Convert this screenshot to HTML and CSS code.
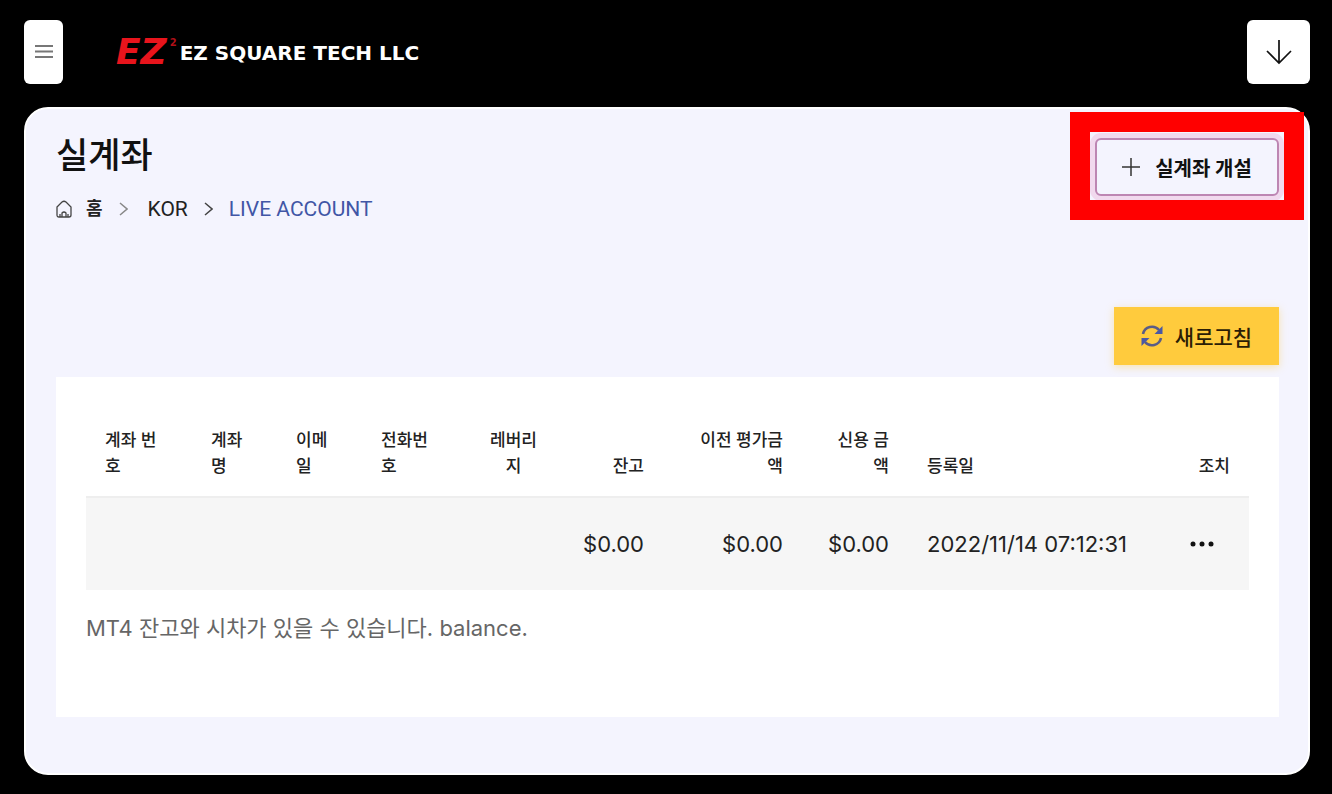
FILE: index.html
```html
<!DOCTYPE html>
<html lang="ko">
<head>
    <meta charset="UTF-8">
    <meta name="viewport" content="width=device-width, initial-scale=1.0">
    <title>실계좌 - EZ SQUARE TECH LLC</title>
    <link rel="stylesheet" href="styles.css">
</head>
<body>

    <header class="topbar">
        <button class="menu-btn" type="button" aria-label="Menu">
            <svg width="20" height="20" viewBox="0 0 20 20" fill="none" stroke="#777" stroke-width="2">
                <path d="M1 4h18M1 9.500h18M1 15h18"/>
            </svg>
        </button>
        <a class="logo" href="#">
            <span class="logo-mark">EZ</span><sup class="logo-sup">2</sup>
            <span class="logo-name">EZ SQUARE TECH LLC</span>
        </a>
        <button class="down-btn" type="button" aria-label="Open">
            <svg width="28" height="28" viewBox="0 0 28 28" fill="none" stroke="#111" stroke-width="1.700">
                <path d="M14 2v23M2 13l12 12 12-12"/>
            </svg>
        </button>
    </header>

    <main class="panel">
        <div class="page-head">
            <div>
                <h1>실계좌</h1>
                <nav class="breadcrumb">
                    <svg class="home-icon" width="16" height="18" viewBox="0 0 16 18" fill="none" stroke="#444" stroke-width="1.300">
                        <path d="M1 7l5-5q2-1.500 4 0l5 5v8q0 2-2 2H3q-2 0-2-2zM4 17v-3M6 17v-4q2-2 4 0v4M12 17v-3"/>
                    </svg>
                    <a class="home" href="#">홈</a>
                    <svg class="sep light" width="9" height="14" viewBox="0 0 9 14"><path d="M1 1l7 6-7 6"/></svg>
                    <a href="#">KOR</a>
                    <svg class="sep" width="9" height="14" viewBox="0 0 9 14"><path d="M1 1l7 6-7 6"/></svg>
                    <a class="current" href="#">LIVE ACCOUNT</a>
                </nav>
            </div>
            <button class="open-btn" type="button">
                <svg width="18" height="18" viewBox="0 0 18 18" stroke="#333" stroke-width="1.500">
                    <path d="M9 0v18M0 9h18"/>
                </svg>
                실계좌 개설
            </button>
        </div>

        <div class="toolbar">
            <button class="refresh-btn" type="button">
                <svg width="22" height="22" viewBox="0 0 22 22">
                    <path d="M2 9a9.200 9.200 0 0 1 16-4M20 13a9.200 9.200 0 0 1-16 4" fill="none" stroke="#5a5c86" stroke-width="2.600"/>
                    <path d="M21.500 1v8h-8zM.5 21v-8h8z" fill="#4a58a5"/>
                </svg>
                새로고침
            </button>
        </div>

        <section class="card">
            <table class="accounts">
                <colgroup>
                    <col class="col-no">
                    <col class="col-name">
                    <col class="col-mail">
                    <col class="col-phone">
                    <col class="col-lev">
                    <col class="col-balance">
                    <col class="col-equity">
                    <col class="col-credit">
                    <col class="col-date">
                    <col>
                </colgroup>
                <thead>
                    <tr>
                        <th>계좌 번<br>호</th>
                        <th>계좌<br>명</th>
                        <th>이메<br>일</th>
                        <th>전화번<br>호</th>
                        <th class="center">레버리<br>지</th>
                        <th class="num">잔고</th>
                        <th class="num">이전 평가금<br>액</th>
                        <th class="num">신용 금<br>액</th>
                        <th>등록일</th>
                        <th class="num">조치</th>
                    </tr>
                </thead>
                <tbody>
                    <tr>
                        <td></td>
                        <td></td>
                        <td></td>
                        <td></td>
                        <td></td>
                        <td class="num">$0.00</td>
                        <td class="num">$0.00</td>
                        <td class="num">$0.00</td>
                        <td>2022/11/14 07:12:31</td>
                        <td>
                            <button class="more-btn" type="button" aria-label="More">
                                <svg width="24" height="6" viewBox="0 0 24 6" fill="#111">
                                    <circle cx="3" cy="3" r="2.500"/>
                                    <circle cx="12" cy="3" r="2.500"/>
                                    <circle cx="21" cy="3" r="2.500"/>
                                </svg>
                            </button>
                        </td>
                    </tr>
                </tbody>
            </table>
            <p class="note">MT4 잔고와 시차가 있을 수 있습니다. balance.</p>
        </section>
    </main>

</body>
</html>
```
FILE: styles.css
```css
* {
    box-sizing: border-box;
}

body {
    margin: 0;
    padding: 20px 22px 19px 24px;
    background-color: #000;
    color: #222;
    font-family: Inter, "Noto Sans CJK KR", sans-serif;
}

button {
    font-family: inherit;
    border: none;
    padding: 0;
    cursor: pointer;
}

a {
    color: inherit;
    text-decoration: none;
}

.topbar {
    display: flex;
    align-items: center;
    height: 64px;
    margin-bottom: 23px;
}

.menu-btn,
.down-btn {
    display: flex;
    align-items: center;
    justify-content: center;
    height: 64px;
    background-color: #fff;
    border-radius: 6px;
}

.menu-btn {
    width: 39px;
}

.down-btn {
    width: 63px;
    margin-left: auto;
}

.logo {
    display: flex;
    align-items: center;
    margin-left: 53px;
    font-family: "DejaVu Sans", sans-serif;
    font-weight: bold;
    line-height: 32px;
}

.logo-mark {
    color: #e8141c;
    font-size: 36px;
    font-style: italic;
}

.logo-sup {
    align-self: flex-start;
    margin-left: 3px;
    color: #b01018;
    font-size: 10px;
    line-height: 16px;
}

.logo-name {
    margin-left: 3px;
    padding-top: 2px;
    color: #fff;
    font-size: 20px;
}

.panel {
    padding: 29px 29px 56px 30px;
    background-color: #f4f4fe;
    border: 2px solid #fff;
    border-radius: 24px;
}

.page-head {
    display: flex;
    justify-content: space-between;
    align-items: flex-start;
}

h1 {
    margin: 0 0 23px;
    color: #111;
    font-size: 35px;
    font-weight: 500;
    line-height: 34px;
}

.breadcrumb {
    display: flex;
    align-items: center;
    font-family: Roboto, "Noto Sans CJK KR", sans-serif;
    font-size: 21px;
    line-height: 28px;
}

.home {
    margin-left: 14px;
    font-size: 18px;
    font-weight: bold;
}

.sep {
    margin: 0 16px;
    fill: none;
    stroke: #444;
    stroke-width: 1.5;
}

.sep.light {
    margin-right: 20px;
    stroke: #888;
}

.current {
    color: #4156a6;
}

.open-btn {
    position: relative;
    display: flex;
    align-items: center;
    justify-content: center;
    gap: 15px;
    width: 184px;
    height: 58px;
    background-color: #f4f4fe;
    border: 2px solid #bd86b3;
    border-radius: 6px;
    box-shadow: 0 0 0 5px #f1d9ee;
    color: #111;
    font-size: 20px;
    font-weight: bold;
}

/* red frame around the open account button */
.open-btn::after {
    content: "";
    position: absolute;
    inset: -28px -27px -26px;
    border: 20px solid #f00;
}

.toolbar {
    display: flex;
    justify-content: flex-end;
    margin: 84px 0 12px;
}

.refresh-btn {
    display: flex;
    align-items: center;
    justify-content: center;
    gap: 12px;
    width: 165px;
    height: 58px;
    background-color: #ffcb3d;
    box-shadow: 0 2px 8px rgba(255, 203, 61, 0.4);
    color: #2b1d05;
    font-size: 21px;
    font-weight: 500;
}

.card {
    padding: 30px 30px 75px;
    background-color: #fff;
}

.accounts {
    width: 100%;
    table-layout: fixed;
    border-collapse: collapse;
}

.col-no,
.col-balance,
.col-credit {
    width: 106px;
}

.col-name,
.col-mail {
    width: 85px;
}

.col-phone {
    width: 108px;
}

.col-lev {
    width: 87px;
}

.col-equity {
    width: 139px;
}

.col-date {
    width: 246px;
}

.accounts th {
    padding: 20px 19px 17px;
    border-bottom: 2px solid #eee;
    font-size: 17px;
    font-weight: 500;
    line-height: 26px;
    text-align: left;
    vertical-align: bottom;
    white-space: nowrap;
}

.accounts td {
    height: 93px;
    padding: 0 19px;
    background-color: #f6f6f6;
    font-size: 22px;
    white-space: nowrap;
}

.accounts .num {
    text-align: right;
}

.accounts .center {
    text-align: center;
}

.more-btn {
    display: block;
    margin: 0 auto;
    background: none;
}

.more-btn svg {
    display: block;
}

.note {
    margin: 24px 0 0;
    color: #666;
    font-size: 22px;
    line-height: 28px;
}
```
